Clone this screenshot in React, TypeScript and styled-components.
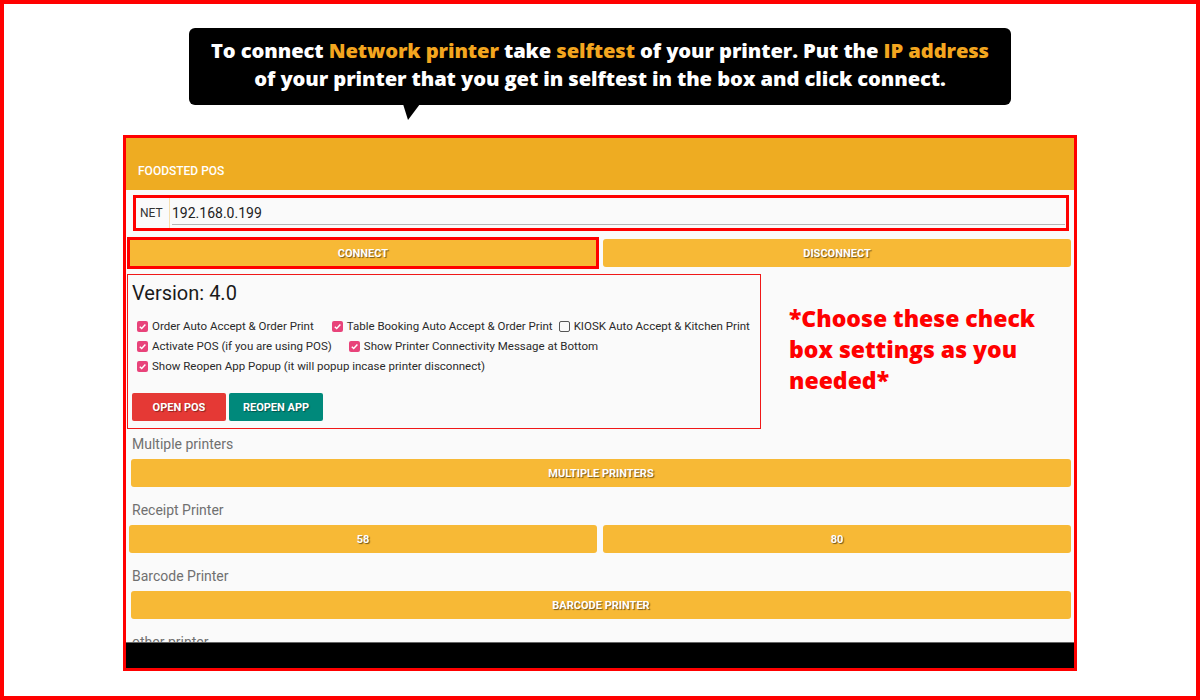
import React from "react";
import styled, { createGlobalStyle } from "styled-components";

const GlobalStyle = createGlobalStyle`
  html, body {
    margin: 0;
    padding: 0;
    background: #ffffff;
  }
  * {
    box-sizing: border-box;
  }
`;

function App() {
  return (
    <>
      <GlobalStyle />
      <Page>
        <Bubble>
          <BubbleText>
            To connect <Hl>Network printer</Hl> take <Hl>selftest</Hl> of your
            printer. Put the <Hl>IP address</Hl>
            <br />
            of your printer that you get in selftest in the box and click
            connect.
          </BubbleText>
          <Tail />
        </Bubble>

        <Device>
          <Header>FOODSTED POS</Header>
          <Body>
            <NetRow>
              <NetLabel>NET</NetLabel>
              <NetInput>192.168.0.199</NetInput>
            </NetRow>

            <ButtonRow>
              <Btn marked>CONNECT</Btn>
              <Btn>DISCONNECT</Btn>
            </ButtonRow>

            <SettingsRow>
              <VersionBox>
                <Version>Version: 4.0</Version>
                <CheckLine>
                  <Check checked space={18} label="Order Auto Accept & Order Print" />
                  <Check checked space={6} label="Table Booking Auto Accept & Order Print" />
                  <Check label="KIOSK Auto Accept & Kitchen Print" />
                </CheckLine>
                <CheckLine>
                  <Check checked space={17} label="Activate POS (if you are using POS)" />
                  <Check checked label="Show Printer Connectivity Message at Bottom" />
                </CheckLine>
                <CheckLine>
                  <Check
                    checked
                    label="Show Reopen App Popup (it will popup incase printer disconnect)"
                  />
                </CheckLine>
                <ActionRow>
                  <ActionBtn tone="#e53935">OPEN POS</ActionBtn>
                  <ActionBtn tone="#00897b">REOPEN APP</ActionBtn>
                </ActionRow>
              </VersionBox>
              <Note>
                *Choose these check
                <br />
                box settings as you
                <br />
                needed*
              </Note>
            </SettingsRow>

            <SectionLabel first>Multiple printers</SectionLabel>
            <WideBtn>MULTIPLE PRINTERS</WideBtn>

            <SectionLabel>Receipt Printer</SectionLabel>
            <ButtonRow>
              <Btn>58</Btn>
              <Btn>80</Btn>
            </ButtonRow>

            <SectionLabel>Barcode Printer</SectionLabel>
            <WideBtn>BARCODE PRINTER</WideBtn>

            <SectionLabel>other printer</SectionLabel>
          </Body>
          <NavBar />
        </Device>
      </Page>
    </>
  );
}

function Check({
  checked,
  label,
  space = 0,
}: {
  checked?: boolean;
  label: string;
  space?: number;
}) {
  return (
    <CheckItem space={space}>
      <Box checked={checked}>
        {checked && (
          <svg width="9" height="9" viewBox="0 0 10 10">
            <path
              d="M2 5.2 L4.1 7.2 L8.2 2.8"
              fill="none"
              stroke="#fff"
              strokeWidth="1.6"
            />
          </svg>
        )}
      </Box>
      <span>{label}</span>
    </CheckItem>
  );
}

const Page = styled.div`
  width: 1200px;
  height: 700px;
  border: 4px solid #ff0000;
  display: flex;
  flex-direction: column;
  align-items: center;
  overflow: hidden;
  font-family: Roboto, "Liberation Sans", sans-serif;
`;

const Bubble = styled.div`
  position: relative;
  margin-top: 24px;
  width: 822px;
  height: 77px;
  background: #000;
  border-radius: 6px;
  display: flex;
  align-items: center;
  justify-content: center;
`;

const BubbleText = styled.div`
  color: #fff;
  font-family: "Open Sans", sans-serif;
  font-weight: 800;
  font-size: 20.2px;
  line-height: 28px;
  text-align: center;
  letter-spacing: -0.1px;
  margin-top: -5px;
`;

const Hl = styled.span`
  color: #f3a61f;
`;

const Tail = styled.div`
  position: absolute;
  left: 214px;
  bottom: -15px;
  width: 0;
  height: 0;
  border-left: 5px solid transparent;
  border-right: 12px solid transparent;
  border-top: 16px solid #000;
`;

const Device = styled.div`
  margin-top: 30px;
  width: 954px;
  height: 536px;
  border: 3px solid #ff0000;
  background: #fafafa;
  display: flex;
  flex-direction: column;
  overflow: hidden;
`;

const Header = styled.div`
  height: 52px;
  flex-shrink: 0;
  background: #eeac22;
  color: #fff;
  font-size: 12px;
  font-weight: 500;
  padding: 26px 0 0 12px;
`;

const Body = styled.div`
  flex: 1;
  overflow: hidden;
  display: flex;
  flex-direction: column;

  & > * {
    flex-shrink: 0;
  }
`;

const NetRow = styled.div`
  margin: 5px 5px 8px 7px;
  height: 36px;
  border: 3px solid #ff0000;
  display: flex;
  align-items: stretch;
`;

const NetLabel = styled.div`
  width: 34px;
  display: flex;
  align-items: center;
  padding-left: 4px;
  font-size: 12px;
  color: #333;
  border-right: 1px solid #f5dfb0;
`;

const NetInput = styled.div`
  flex: 1;
  margin: 2px 1px 3px 2px;
  border-bottom: 1px solid #b5b5b5;
  font-size: 14px;
  color: #222;
  display: flex;
  align-items: center;
  padding-top: 2px;
`;

const ButtonRow = styled.div`
  display: flex;
  gap: 6px;
  padding: 0 3px;
`;

const Btn = styled.div<{ marked?: boolean }>`
  flex: 1;
  height: 28px;
  background: #f7b936;
  color: #fff;
  font-size: 11px;
  font-weight: 700;
  text-shadow: 1px 1px 1px rgba(0, 0, 0, 0.55);
  display: flex;
  align-items: center;
  justify-content: center;
  outline: ${(p) => (p.marked ? "3px solid #ff0000" : "none")};
  outline-offset: -1px;
  border-radius: ${(p) => (p.marked ? "0" : "3px")};
`;

const WideBtn = styled(Btn)`
  flex: none;
  margin: 0 3px 0 5px;
`;

const SettingsRow = styled.div`
  display: flex;
  margin-top: 7px;
  padding-left: 1px;
`;

const VersionBox = styled.div`
  width: 634px;
  height: 155px;
  border: 1.5px solid #f01818;
  padding: 5px 0 0 4px;
`;

const Version = styled.div`
  font-size: 20px;
  color: #1a1a1a;
  line-height: 26px;
  margin-bottom: 10px;
`;

const CheckLine = styled.div`
  display: flex;
  height: 20px;
  align-items: center;
  padding-left: 5px;
  white-space: nowrap;
`;

const CheckItem = styled.div<{ space: number }>`
  display: flex;
  align-items: center;
  gap: 4px;
  margin-right: ${(p) => p.space}px;
  font-size: 11.5px;
  color: #2a2a2a;
`;

const Box = styled.span<{ checked?: boolean }>`
  width: 11px;
  height: 11px;
  border-radius: 2px;
  display: inline-flex;
  align-items: center;
  justify-content: center;
  background: ${(p) => (p.checked ? "#e8437a" : "transparent")};
  border: ${(p) => (p.checked ? "none" : "1.3px solid #555")};
`;

const ActionRow = styled.div`
  display: flex;
  gap: 3px;
  margin-top: 17px;
`;

const ActionBtn = styled.div<{ tone: string }>`
  width: 94px;
  height: 28px;
  background: ${(p) => p.tone};
  border-radius: 2px;
  color: #fff;
  font-size: 11px;
  font-weight: 700;
  text-shadow: 1px 1px 1px rgba(0, 0, 0, 0.4);
  display: flex;
  align-items: center;
  justify-content: center;
`;

const Note = styled.div`
  margin: 29px 0 0 28px;
  color: #ff0000;
  font-family: "Open Sans", sans-serif;
  font-weight: 800;
  font-size: 23px;
  line-height: 31px;
`;

const SectionLabel = styled.div<{ first?: boolean }>`
  font-size: 14px;
  color: #707070;
  padding-left: 6px;
  margin: ${(p) => (p.first ? "6px" : "14px")} 0 5px;
  line-height: 19px;
`;

const NavBar = styled.div`
  height: 26px;
  flex-shrink: 0;
  background: #000;
  border-top: 1px solid #666;
`;

export default App;
